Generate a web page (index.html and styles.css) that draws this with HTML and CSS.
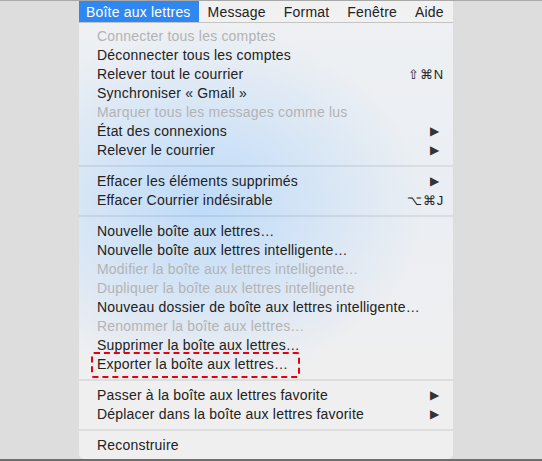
FILE: index.html
```html
<!DOCTYPE html>
<html lang="fr">
<head>
<meta charset="utf-8">
<title>Menu Boîte aux lettres</title>
<link rel="stylesheet" href="styles.css">
</head>
<body>
<div class="screen">
  <div class="menu-wrap">
    <div class="menubar">
      <span class="mb-item active">Boîte aux lettres</span>
      <span class="mb-item">Message</span>
      <span class="mb-item">Format</span>
      <span class="mb-item">Fenêtre</span>
      <span class="mb-item">Aide</span>
    </div>
    <div class="panel">
      <div class="row disabled"><span>Connecter tous les comptes</span></div>
      <div class="row"><span>Déconnecter tous les comptes</span></div>
      <div class="row"><span>Relever tout le courrier</span><span class="key">⇧⌘N</span></div>
      <div class="row"><span>Synchroniser « Gmail »</span></div>
      <div class="row disabled"><span>Marquer tous les messages comme lus</span></div>
      <div class="row"><span>État des connexions</span><span class="arrow">▶</span></div>
      <div class="row"><span>Relever le courrier</span><span class="arrow">▶</span></div>
      <div class="sep"></div>
      <div class="row"><span>Effacer les éléments supprimés</span><span class="arrow">▶</span></div>
      <div class="row"><span>Effacer Courrier indésirable</span><span class="key">⌥⌘J</span></div>
      <div class="sep"></div>
      <div class="row"><span>Nouvelle boîte aux lettres…</span></div>
      <div class="row"><span>Nouvelle boîte aux lettres intelligente…</span></div>
      <div class="row disabled"><span>Modifier la boîte aux lettres intelligente…</span></div>
      <div class="row disabled"><span>Dupliquer la boîte aux lettres intelligente</span></div>
      <div class="row"><span>Nouveau dossier de boîte aux lettres intelligente…</span></div>
      <div class="row disabled"><span>Renommer la boîte aux lettres…</span></div>
      <div class="row"><span>Supprimer la boîte aux lettres…</span></div>
      <div class="row highlight"><span class="boxed">Exporter la boîte aux lettres…</span></div>
      <div class="sep"></div>
      <div class="row"><span>Passer à la boîte aux lettres favorite</span><span class="arrow">▶</span></div>
      <div class="row"><span>Déplacer dans la boîte aux lettres favorite</span><span class="arrow">▶</span></div>
      <div class="sep"></div>
      <div class="row"><span>Reconstruire</span></div>
    </div>
  </div>
</div>
</body>
</html>
```
FILE: styles.css
```css
html, body {
  margin: 0;
  padding: 0;
}
body {
  background: #dddddd;
  font-family: "Liberation Sans", Arial, sans-serif;
  width: 542px;
  height: 461px;
  overflow: hidden;
}
.screen {
  height: 458px;
  border-top: 1px solid #a9a9a9;
  border-bottom: 2px solid #6e6e6e;
  box-sizing: content-box;
}
.menu-wrap {
  margin-left: 79px;
  width: 374px;
  display: flex;
  flex-direction: column;
}
.menubar {
  height: 21px;
  background: #f1f1f1;
  border-bottom: 1px solid #c4c4c4;
  display: flex;
  align-items: stretch;
  font-size: 14px;
  letter-spacing: 0.2px;
  color: #222;
  overflow: hidden;
  white-space: nowrap;
}
.mb-item {
  display: flex;
  align-items: center;
  flex-shrink: 0;
  padding: 0 9px;
}
.mb-item.active {
  background: #2f87f1;
  color: #fff;
  padding: 0 8px 0 7px;
}
.panel {
  height: 432px;
  padding: 4px 0 0 0;
  border-radius: 0 0 5px 5px;
  background:
    radial-gradient(ellipse 220px 180px at 33% 42%, rgba(183, 216, 250, 0.85), rgba(183, 216, 250, 0) 100%),
    linear-gradient(180deg, #eef0f3 0%, #eaeef3 40%, #efeff0 75%, #efefef 100%);
  font-size: 14px;
  letter-spacing: 0.2px;
  color: #222;
}
.row {
  height: 19px;
  line-height: 19px;
  display: flex;
  justify-content: space-between;
  align-items: center;
  white-space: nowrap;
  padding: 0 9px 0 18px;
}
.row.disabled {
  color: #b3b3b3;
}
.key {
  font-size: 13px;
  letter-spacing: 0.8px;
}
.arrow {
  font-size: 12px;
  color: #333;
  margin-right: 5px;
}
.sep {
  height: 2px;
  margin: 5px 0;
  background: rgba(0, 0, 0, 0.07);
}
.boxed {
  position: relative;
}
.boxed::after {
  content: "";
  position: absolute;
  left: -6px;
  right: -12px;
  top: -3px;
  bottom: -4px;
  border: 2.5px dashed #e4000f;
  border-radius: 3px;
}
```
